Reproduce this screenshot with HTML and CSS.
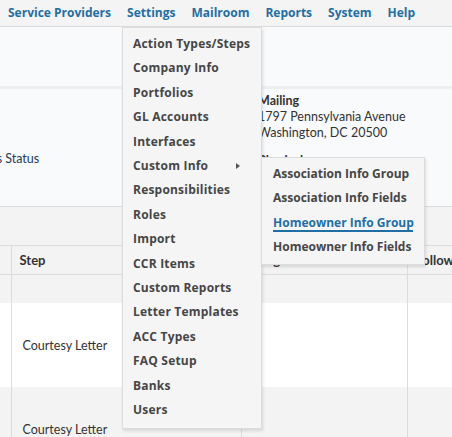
FILE: index.html
```html
<!DOCTYPE html>
<html lang="en">

<head>
    <meta charset="UTF-8">
    <meta name="viewport" content="width=device-width, initial-scale=1.0">
    <title>Settings</title>
    <link rel="stylesheet" href="styles.css">
</head>

<body>
    <nav class="topnav">
        <ul class="menu">
            <li class="menu-item">Service Providers</li>
            <li class="menu-item open">Settings
                <ul class="dropdown">
                    <li>Action Types/Steps</li>
                    <li>Company Info</li>
                    <li>Portfolios</li>
                    <li>GL Accounts</li>
                    <li>Interfaces</li>
                    <li class="has-sub">Custom Info <span class="caret"></span>
                        <ul class="submenu">
                            <li>Association Info Group</li>
                            <li>Association Info Fields</li>
                            <li class="active">Homeowner Info Group</li>
                            <li>Homeowner Info Fields</li>
                        </ul>
                    </li>
                    <li>Responsibilities</li>
                    <li>Roles</li>
                    <li>Import</li>
                    <li>CCR Items</li>
                    <li>Custom Reports</li>
                    <li>Letter Templates</li>
                    <li>ACC Types</li>
                    <li>FAQ Setup</li>
                    <li>Banks</li>
                    <li>Users</li>
                </ul>
            </li>
            <li class="menu-item">Mailroom</li>
            <li class="menu-item">Reports</li>
            <li class="menu-item">System</li>
            <li class="menu-item">Help</li>
        </ul>
    </nav>

    <main class="page">
        <div class="toolbar"></div>

        <section class="info">
            <div class="status">Process Status</div>
            <div class="address">
                <div class="addr-label">Mailing</div>
                <div>1797 Pennsylvania Avenue</div>
                <div>Washington, DC 20500</div>
                <div class="addr-label next">Physical</div>
            </div>
        </section>

        <div class="grid-bar"></div>

        <table class="grid">
            <colgroup>
                <col class="c-first">
                <col class="c-step">
                <col class="c-assigned">
                <col>
            </colgroup>
            <thead>
                <tr>
                    <th></th>
                    <th>Step</th>
                    <th>Assigned <span class="sort">&#9662;</span></th>
                    <th>Follow Up</th>
                </tr>
            </thead>
            <tbody>
                <tr class="filter-row">
                    <td></td>
                    <td></td>
                    <td></td>
                    <td></td>
                </tr>
                <tr class="row">
                    <td></td>
                    <td>Courtesy Letter</td>
                    <td></td>
                    <td></td>
                </tr>
                <tr class="row alt">
                    <td></td>
                    <td>Courtesy Letter</td>
                    <td></td>
                    <td></td>
                </tr>
            </tbody>
        </table>
    </main>
</body>

</html>
```

FILE: styles.css
```css
body {
    font-family: Lato, "Open Sans", Arial, sans-serif;
    font-size: 12.5px;
    color: #333;
    background-color: #f9fafc;
    margin: 0;
    overflow: hidden;
}

.topnav {
    height: 26px;
    background-color: #f4f4f4;
    border-bottom: 1px solid #dcdcdc;
    position: relative;
    z-index: 10;
    font-family: "Open Sans", Arial, sans-serif;
}

.menu {
    list-style: none;
    margin: 0;
    padding: 0;
    display: flex;
    white-space: nowrap;
}

.menu-item {
    position: relative;
    padding: 0 8px;
    line-height: 25px;
    font-size: 12px;
    font-weight: bold;
    color: #1f6fa5;
}

.dropdown,
.submenu {
    list-style: none;
    margin: 0;
    position: absolute;
    background-color: #f5f5f5;
    border: 1px solid #dcdcdc;
    box-shadow: 1px 2px 3px rgba(0, 0, 0, 0.12);
}

.dropdown {
    top: 27px;
    left: 3px;
    width: 138px;
    padding: 4px 0 5px;
}

.dropdown li,
.submenu li {
    font-size: 12px;
    font-weight: bold;
    color: #464646;
    line-height: 24.4px;
    padding: 0 10px;
    letter-spacing: 0.2px;
}

.has-sub {
    position: relative;
}

.caret {
    position: absolute;
    left: 113px;
    top: 9px;
    border-left: 4px solid #555;
    border-top: 3px solid transparent;
    border-bottom: 3px solid transparent;
}

.submenu {
    top: 3px;
    left: 138px;
    width: 162px;
    padding: 4px 0;
}

.submenu li {
    padding: 0 11px;
    letter-spacing: 0;
}

.submenu .active {
    color: #1f6fa5;
}

.submenu .active::after {
    content: "";
    display: block;
    height: 2px;
    margin-top: -5px;
    margin-bottom: 3px;
    background-color: #1f6fa5;
}

.toolbar {
    height: 59px;
    border-bottom: 3px solid #efefef;
}

.info {
    height: 117px;
    display: flex;
    justify-content: space-between;
    border-bottom: 1px solid #dcdcdc;
}

.status {
    margin-top: 62px;
    margin-left: -40px;
    color: #26395a;
}

.address {
    width: 194px;
    padding-top: 4px;
    line-height: 16px;
    white-space: nowrap;
}

.addr-label {
    font-weight: bold;
    color: #333;
}

.addr-label.next {
    margin-top: 12px;
}

.grid-bar {
    height: 38px;
    background-color: #f3f3f3;
    border-bottom: 1px solid #dcdcdc;
}

.grid {
    border-collapse: collapse;
    table-layout: fixed;
    width: 520px;
}

.c-first {
    width: 11px;
}

.c-step {
    width: 230px;
}

.c-assigned {
    width: 166px;
}

.grid th,
.grid td {
    border-left: 1px solid #dcdcdc;
    padding: 0 11px;
    text-align: left;
    white-space: nowrap;
    overflow: hidden;
}

.grid th:first-child,
.grid td:first-child {
    border-left: none;
}

.grid th {
    height: 28px;
    padding: 0 8px;
    font-size: 13px;
    font-weight: bold;
    color: #333;
    background-color: #f3f3f3;
    border-bottom: 1px solid #dcdcdc;
}

.sort {
    float: right;
    font-size: 10px;
    color: #666;
    margin-right: 10px;
}

.filter-row td {
    height: 28px;
    background-color: #f3f3f3;
}

.row td {
    height: 84px;
    background-color: #fff;
    color: #333;
}

.row.alt td {
    background-color: #f3f3f3;
}
```
